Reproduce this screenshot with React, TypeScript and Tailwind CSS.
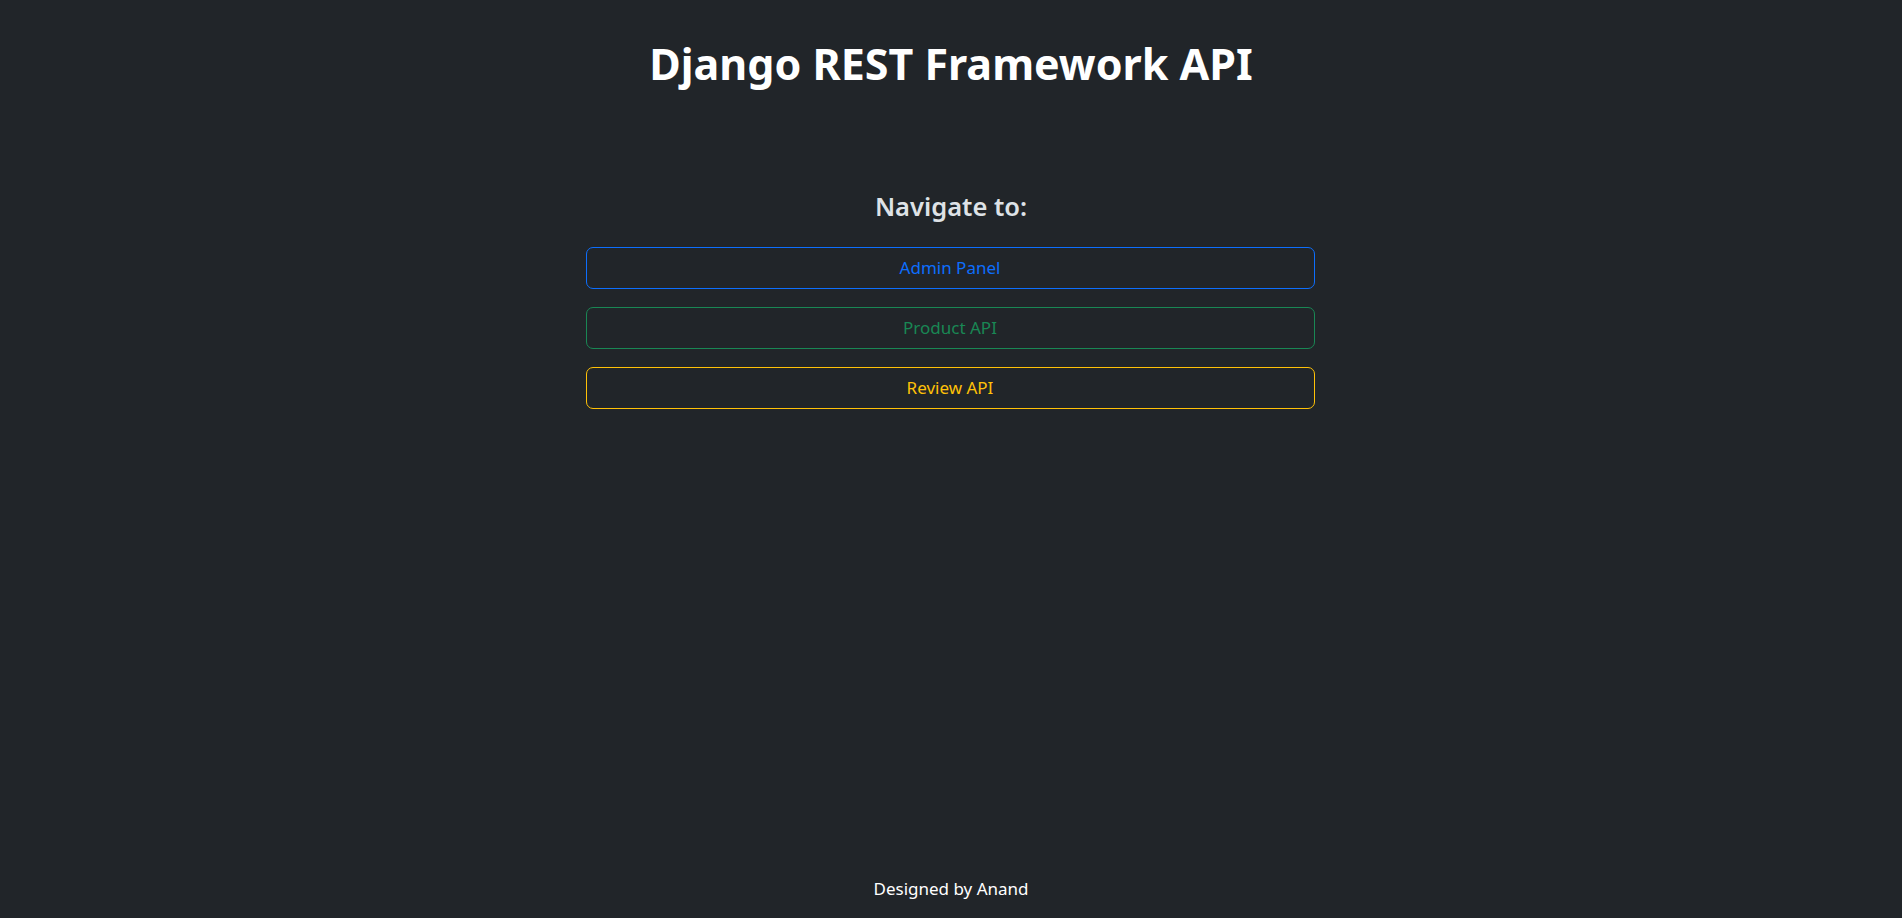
import React from 'react';

const App = () => {
  const links = [
    { label: 'Admin Panel', className: 'border-[#0d6efd] text-[#0d6efd]' },
    { label: 'Product API', className: 'border-[#198754] text-[#198754]' },
    { label: 'Review API', className: 'border-[#ffc107] text-[#ffc107]' }
  ];

  return (
    <div className="min-h-screen bg-[#212529] flex flex-col items-center font-['Noto_Sans',sans-serif]">
      <h1 className="mt-[37px] text-[43px] leading-[53px] font-bold text-white">
        Django REST Framework API
      </h1>

      <main className="mt-[100px] flex flex-col items-center">
        <h4 className="text-[25.5px] leading-[32px] font-semibold text-[#dee2e6]">Navigate to:</h4>
        <div className="mt-[25px] w-[729px] -translate-x-px flex flex-col gap-[18px]">
          {links.map((link) => (
            <a
              key={link.label}
              href="#"
              className={`h-[42px] flex items-center justify-center rounded-[7px] border text-[17px] ${link.className}`}
            >
              {link.label}
            </a>
          ))}
        </div>
      </main>

      <footer className="mt-auto pb-[16px] text-[17px] leading-[26px] text-white">
        Designed by Anand
      </footer>
    </div>
  );
};

export default App;
